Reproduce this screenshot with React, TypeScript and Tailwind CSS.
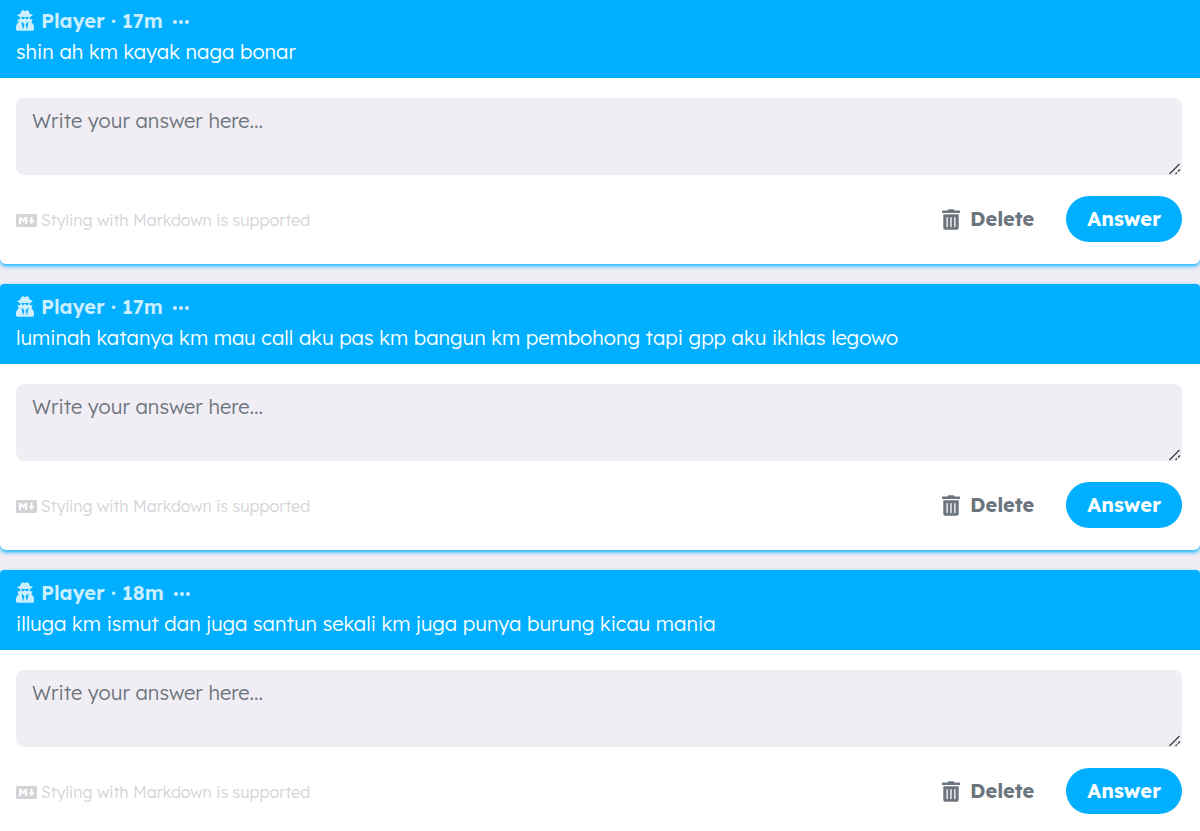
import { FaMarkdown, FaTrashAlt, FaUserSecret } from "react-icons/fa"

interface Question {
  id: number
  age: string
  text: string
}

const questions: Question[] = [
  { id: 1, age: "17m", text: "shin ah km kayak naga bonar" },
  {
    id: 2,
    age: "17m",
    text: "luminah katanya km mau call aku pas km bangun km pembohong tapi gpp aku ikhlas legowo",
  },
  { id: 3, age: "18m", text: "illuga km ismut dan juga santun sekali km juga punya burung kicau mania" },
]

function QuestionHeader({ question }: { question: Question }) {
  return (
    <header className="rounded-t-sm bg-[#00afff] px-4 pt-[7px] pb-[11px] text-[20px] leading-[31px] text-white group-first:rounded-none group-first:pt-[5px]">
      <div className="flex items-center font-semibold text-white/80">
        <FaUserSecret className="mr-[7px] h-[21px] w-[18px]" />
        <span>Player · {question.age}</span>
        <button type="button" aria-label="More options" className="ml-2.5 pt-0.5">
          <svg viewBox="0 0 16 4" className="h-1 w-4" fill="currentColor">
            <circle cx="2" cy="2" r="2" />
            <circle cx="8" cy="2" r="2" />
            <circle cx="14" cy="2" r="2" />
          </svg>
        </button>
      </div>
      <p className="font-light">{question.text}</p>
    </header>
  )
}

function AnswerForm({ id }: { id: number }) {
  return (
    <form className="pt-5 pr-[18px] pb-[22px] pl-4" onSubmit={(e) => e.preventDefault()}>
      <div className="relative">
        <textarea
          id={`answer-${id}`}
          aria-label="Your answer"
          placeholder="Write your answer here..."
          className="block h-[77px] w-full resize-y rounded-lg bg-[#f0edf4] px-4 py-[7px] text-[20px] leading-[31px] font-light text-gray-700 outline-none placeholder:text-[#6c757d] [&::-webkit-resizer]:hidden"
        />
        {/* resize grip */}
        <svg
          viewBox="0 0 12 12"
          className="pointer-events-none absolute right-px bottom-0 size-3"
          fill="none"
          stroke="#444"
          strokeWidth="1.4"
        >
          <path d="M0.5 11 10.5 1M6.5 11 8 9.5M9 8.5 11 6.5" />
        </svg>
      </div>
      <div className="mt-[21px] flex items-center justify-between">
        <span className="flex items-center gap-1 pt-0.5 text-[16px] font-light text-[#d3d4d8]">
          <FaMarkdown className="size-[21px]" />
          Styling with Markdown is supported
        </span>
        <div className="flex items-center gap-8 text-[20px] leading-[30px] font-bold">
          <button type="button" className="flex items-center gap-2.5 text-[#6c757d]">
            <FaTrashAlt className="h-[21px] w-[18px]" />
            Delete
          </button>
          <button type="submit" className="rounded-full bg-[#00afff] px-[21px] py-2 text-white">
            Answer
          </button>
        </div>
      </div>
    </form>
  )
}

export default function App() {
  return (
    <main className="flex min-h-screen flex-col gap-5 bg-[#f0edf4] font-['Lexend','Inter',sans-serif]">
      {questions.map((question) => (
        <article
          key={question.id}
          className="group rounded-md bg-white shadow-[0_2px_4px_#00afff] first:rounded-t-none"
        >
          <QuestionHeader question={question} />
          <AnswerForm id={question.id} />
        </article>
      ))}
    </main>
  )
}
